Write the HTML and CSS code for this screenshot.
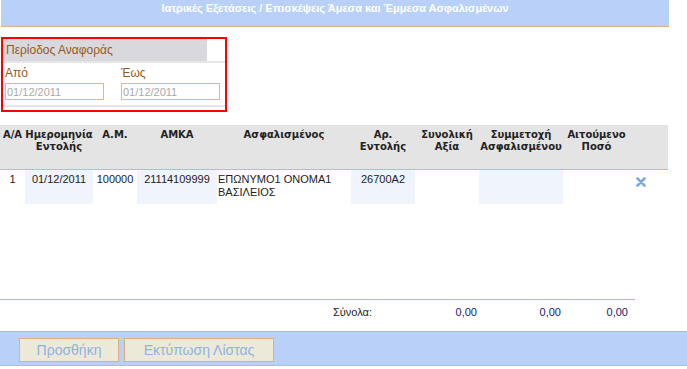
FILE: index.html
```html
<!DOCTYPE html>
<html lang="el">
<head>
    <meta charset="UTF-8">
    <meta name="viewport" content="width=device-width, initial-scale=1.0">
    <title>Ιατρικές Εξετάσεις</title>
    <link rel="stylesheet" href="styles.css">
</head>
<body>
    <div class="title-bar">Ιατρικές Εξετάσεις / Επισκέψεις Άμεσα και Έμμεσα Ασφαλισμένων</div>

    <div class="period">
        <div class="period-head">Περίοδος Αναφοράς</div>
        <div class="period-fields">
            <div class="field">
                <label>Από</label>
                <input type="text" placeholder="01/12/2011">
            </div>
            <div class="field">
                <label>Έως</label>
                <input type="text" placeholder="01/12/2011">
            </div>
        </div>
    </div>

    <div class="grid-wrap">
        <table class="grid">
            <colgroup>
                <col style="width:25px">
                <col style="width:68px">
                <col style="width:44px">
                <col style="width:80px">
                <col style="width:134px">
                <col style="width:64px">
                <col style="width:64px">
                <col style="width:84px">
                <col style="width:67px">
                <col style="width:38px">
            </colgroup>
            <thead>
                <tr>
                    <th>A/A</th>
                    <th>Ημερομηνία Εντολής</th>
                    <th>Α.Μ.</th>
                    <th>ΑΜΚΑ</th>
                    <th>Ασφαλισμένος</th>
                    <th>Αρ. Εντολής</th>
                    <th>Συνολική Αξία</th>
                    <th>Συμμετοχή Ασφαλισμένου</th>
                    <th>Αιτούμενο Ποσό</th>
                    <th></th>
                </tr>
            </thead>
            <tbody>
                <tr>
                    <td>1</td>
                    <td class="hl">01/12/2011</td>
                    <td>100000</td>
                    <td class="hl">21114109999</td>
                    <td class="name">ΕΠΩΝΥΜΟ1 ΟΝΟΜΑ1 ΒΑΣΙΛΕΙΟΣ</td>
                    <td class="hl">26700Α2</td>
                    <td></td>
                    <td class="hl"></td>
                    <td></td>
                    <td class="del">
                        <svg width="10" height="10" viewBox="0 0 10 10">
                            <path d="M1.5 1.5 L8.5 8.5 M8.5 1.5 L1.5 8.5" stroke="#7fa8d4" stroke-width="2.6" stroke-linecap="round"/>
                        </svg>
                    </td>
                </tr>
            </tbody>
        </table>
    </div>

    <div class="totals">
        <span></span>
        <span class="label">Σύνολα:</span>
        <span class="val">0,00</span>
        <span class="val">0,00</span>
        <span class="val">0,00</span>
    </div>

    <div class="toolbar">
        <button class="btn-add">Προσθήκη</button>
        <button class="btn-print">Εκτύπωση Λίστας</button>
    </div>
</body>
</html>
```

FILE: styles.css
```css
body {
    margin: 0;
    font-family: "Liberation Sans", Arial, sans-serif;
    font-size: 11px;
    color: #222;
    background: #fff;
}
.title-bar {
    width: 668px;
    height: 27px;
    margin-left: 1px;
    box-sizing: border-box;
    padding-top: 2px;
    background: #b9d1f8;
    border-bottom: 1px solid #dcb48a;
    color: #fff;
    font-weight: bold;
    font-size: 11px;
    text-align: center;
}
.period {
    width: 226px;
    height: 75px;
    box-sizing: border-box;
    margin: 10px 0 0 1px;
    border: 2px solid #f00;
    color: #94581c;
    font-size: 12px;
}
.period-head {
    width: 201px;
    height: 22px;
    line-height: 22px;
    padding-left: 3px;
    background: #d9d9dd;
}
.period-fields {
    display: flex;
    gap: 17px;
    padding: 3px 0 0 2px;
    border-top: 2px solid #e6e6e6;
    border-bottom: 2px solid #e6e6e6;
    box-sizing: border-box;
    height: 46px;
}
.field {
    display: flex;
    flex-direction: column;
    gap: 3px;
}
.field label {
    line-height: 14px;
}
.field input {
    width: 99px;
    height: 17px;
    box-sizing: border-box;
    margin: 0;
    padding: 0 1px;
    border: 1px solid #deb887;
    font-family: "Liberation Sans", Arial, sans-serif;
    font-size: 11px;
}
.field input::placeholder {
    color: #a8a8a8;
}
.grid-wrap {
    width: 668px;
    height: 174px;
    margin-top: 13px;
}
.grid {
    width: 668px;
    border-collapse: collapse;
    table-layout: fixed;
}
.grid th {
    height: 44px;
    padding: 4px 0 0;
    vertical-align: top;
    background: #e4e4e4;
    border-bottom: 1px solid #e6b27e;
    font-family: "DejaVu Sans", Verdana, sans-serif;
    font-size: 10px;
    line-height: 12px;
    font-weight: bold;
    color: #222;
    box-sizing: border-box;
}
.grid td {
    height: 27px;
    padding: 3px 0 0;
    vertical-align: top;
    text-align: center;
    line-height: 13px;
}
.grid td.hl {
    background: #f0f4fd;
}
.grid td.name {
    text-align: left;
    padding-left: 1px;
}
.grid td.del {
    padding-top: 7px;
    padding-left: 6px;
    text-align: left;
}
.totals {
    display: grid;
    grid-template-columns: 333px 82px 64px 84px 67px;
    width: 635px;
    height: 32px;
    box-sizing: border-box;
    border-top: 1px solid #dcb48a;
    padding-top: 6px;
}
.totals .label {
    color: #222;
}
.totals .val {
    text-align: right;
    padding-right: 2px;
    color: #1a1a70;
}
.toolbar {
    height: 35px;
    box-sizing: border-box;
    background: #b9d1f8;
    border-top: 1px solid #dcb48a;
    border-bottom: 1px solid #dcb48a;
    padding: 6px 0 0 19px;
    display: flex;
    gap: 5px;
}
button {
    height: 24px;
    background: #ece9d8;
    border: 1px solid #d9b07e;
    color: #8fb2e6;
    font-family: "Liberation Sans", Arial, sans-serif;
    font-size: 14px;
    padding: 0;
    margin: 0;
}
.btn-add {
    width: 100px;
}
.btn-print {
    width: 150px;
}
```
